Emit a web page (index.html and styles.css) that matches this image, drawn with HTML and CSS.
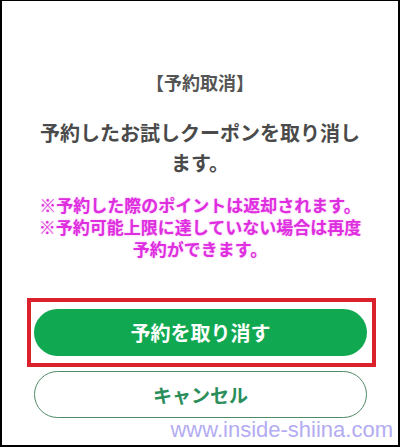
FILE: index.html
```html
<!DOCTYPE html>
<html lang="ja">
<head>
<meta charset="utf-8">
<title>予約取消</title>
<link rel="stylesheet" href="styles.css">
</head>
<body>
<div class="page">
  <h1 class="title">【予約取消】</h1>
  <p class="lead">予約したお試しクーポンを取り消します。</p>
  <p class="note">※予約した際のポイントは返却されます。<br>※予約可能上限に達していない場合は再度予約ができます。</p>
  <div class="frame">
    <button class="btn btn-primary" type="button">予約を取り消す</button>
  </div>
  <button class="btn btn-cancel" type="button">キャンセル</button>
  <div class="watermark">www.inside-shiina.com</div>
</div>
</body>
</html>
```

FILE: styles.css
```css
html, body {
  margin: 0;
  padding: 0;
  background: #ffffff;
}
.page {
  position: relative;
  box-sizing: border-box;
  width: 400px;
  height: 447px;
  border-style: solid;
  border-color: #000000;
  border-width: 1px 2px 2px 2px;
  padding-top: 69px;
  display: flex;
  flex-direction: column;
  align-items: center;
  font-family: "Noto Sans CJK JP", "Noto Sans", sans-serif;
  overflow: hidden;
}
.title {
  margin: 0;
  font-size: 18px;
  line-height: 24px;
  font-weight: 700;
  color: #555555;
}
.lead {
  margin: 24px 0 0;
  width: 330px;
  font-size: 20px;
  line-height: 30px;
  font-weight: 700;
  color: #4a4a4a;
  text-align: center;
}
.note {
  margin: 16px 0 0;
  width: 330px;
  font-size: 17px;
  line-height: 22px;
  font-weight: 700;
  color: #de2ee0;
  text-align: center;
  text-shadow: 0 0 2px #f6a8f4;
}
.frame {
  box-sizing: border-box;
  margin: 38px 0 0 3px;
  width: 349px;
  height: 69px;
  border: 4px solid #d9222c;
  padding: 7px 5px 7px 3px;
  display: flex;
}
.btn {
  box-sizing: border-box;
  width: 333px;
  height: 47px;
  border-radius: 24px;
  font-family: "Noto Sans CJK JP", "Noto Sans", sans-serif;
  font-weight: 700;
  display: flex;
  align-items: center;
  justify-content: center;
  padding: 0;
  cursor: pointer;
}
.btn-primary {
  background: #10a850;
  border: none;
  color: #ffffff;
  font-size: 20px;
}
.btn-cancel {
  margin: 4px 0 0 1px;
  background: #ffffff;
  border: 1.5px solid #4f8a66;
  color: #2a8d5a;
  font-size: 19px;
}
.watermark {
  position: absolute;
  right: 5px;
  top: 418px;
  font-family: "Liberation Sans", Arial, sans-serif;
  font-size: 22px;
  line-height: 22px;
  color: #b3acf2;
  white-space: nowrap;
}
```
